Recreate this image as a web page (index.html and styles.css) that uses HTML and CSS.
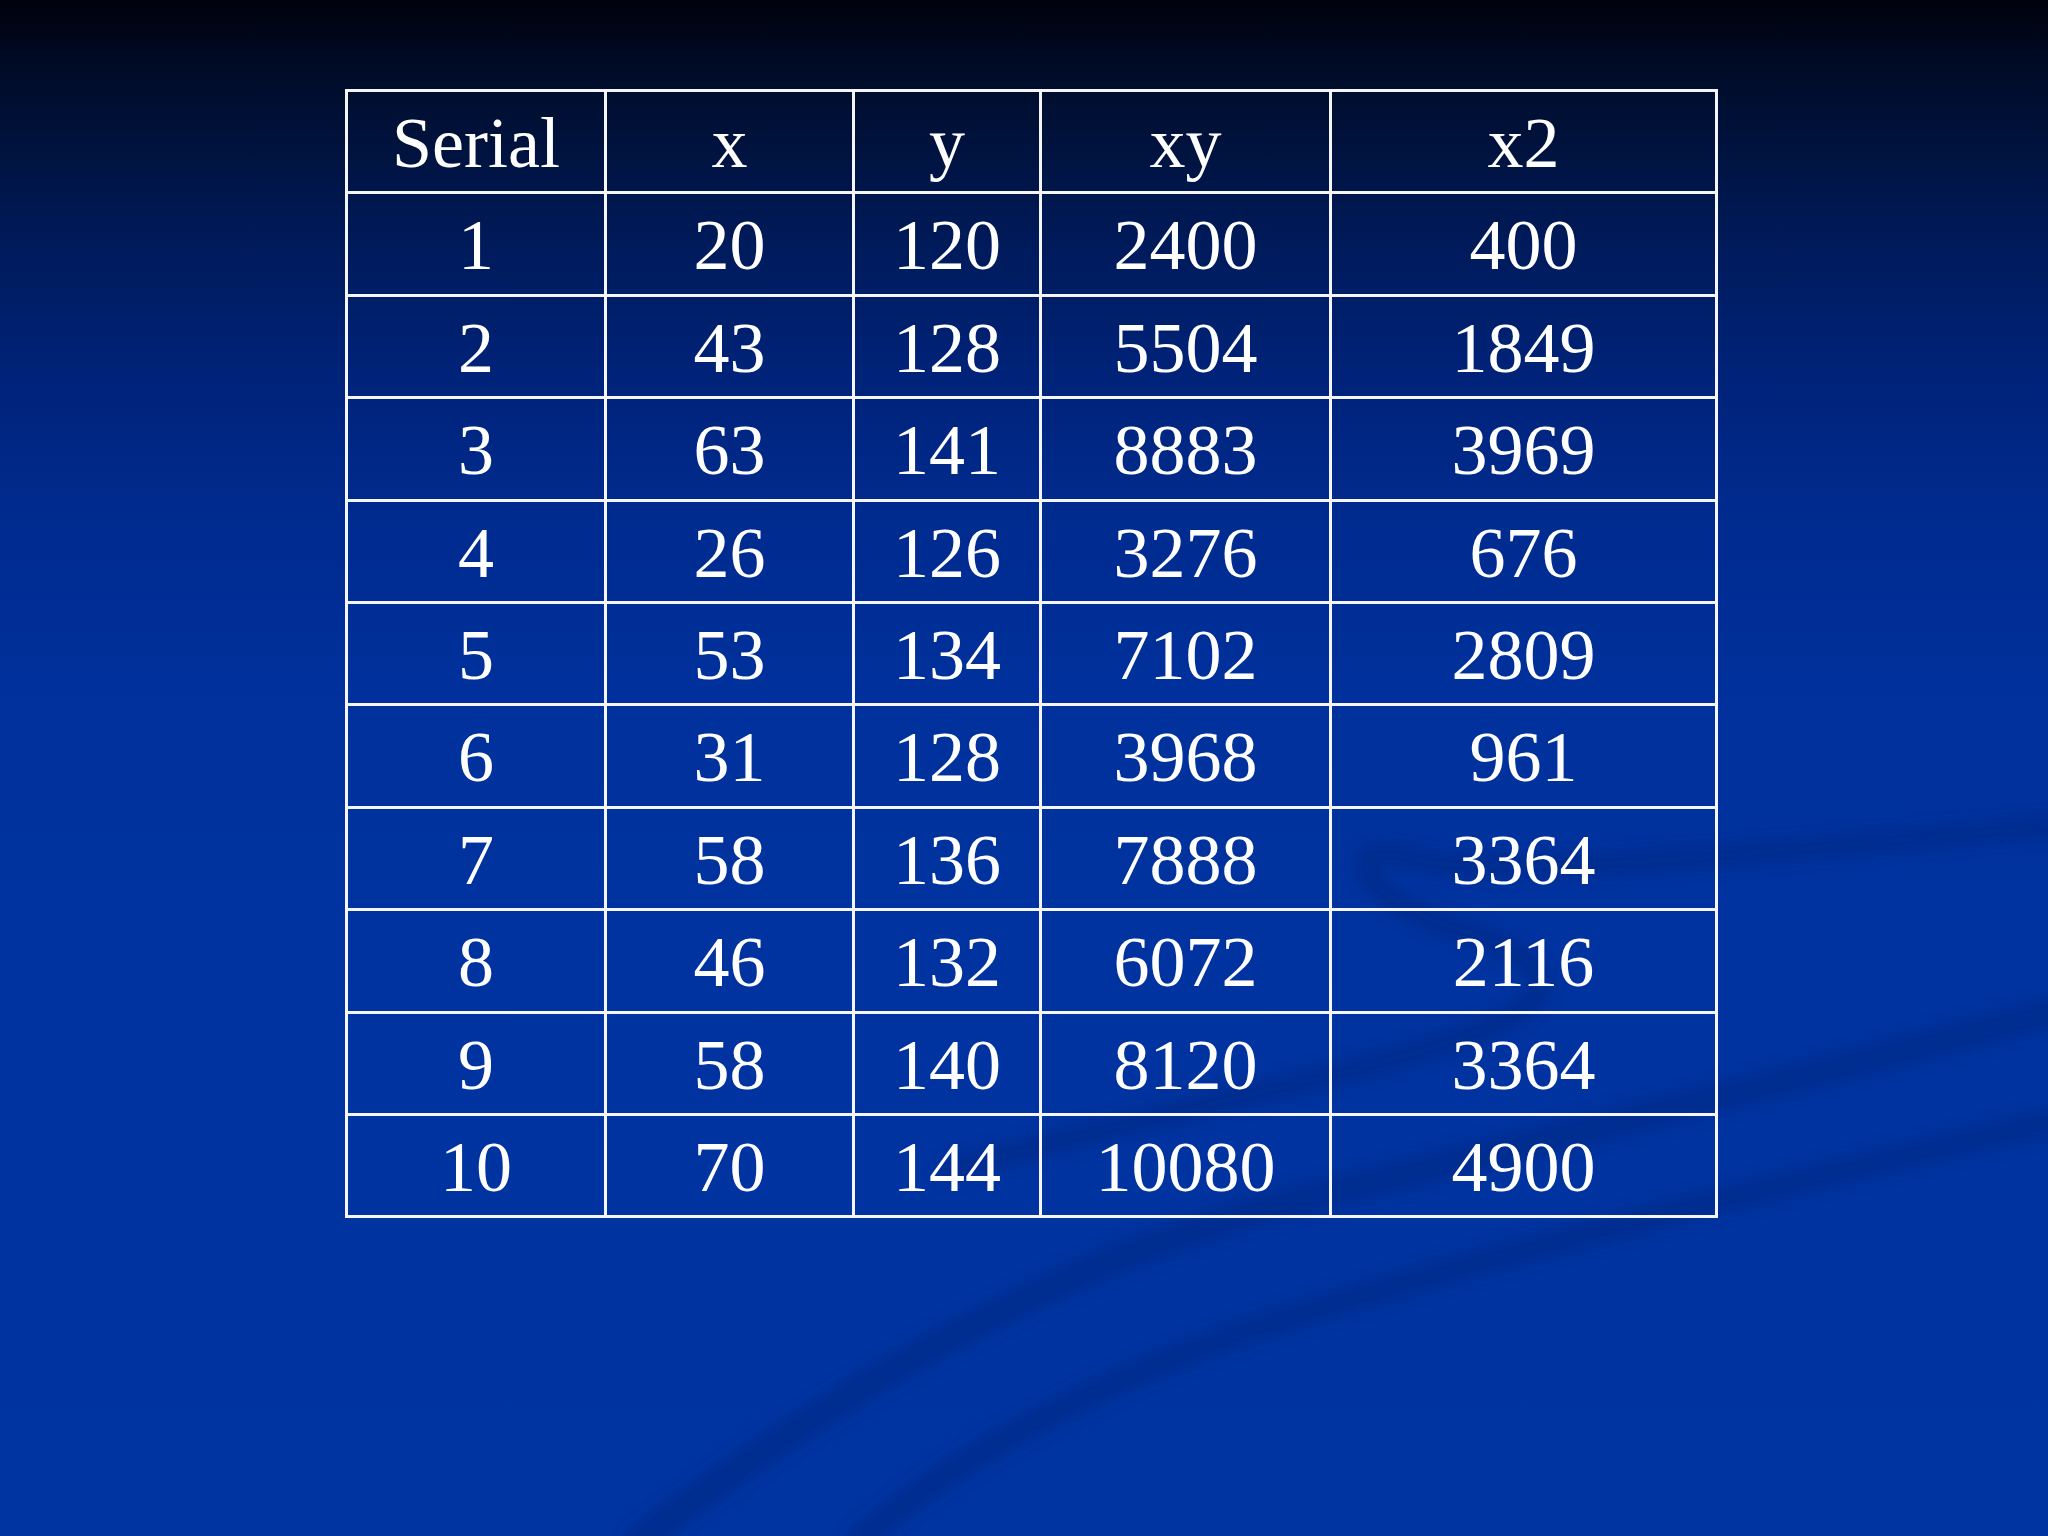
FILE: index.html
```html
<!DOCTYPE html>
<html>
<head>
<meta charset="utf-8">
<link rel="stylesheet" href="styles.css">
</head>
<body>
<div class="slide">
  <svg class="swoosh" width="2048" height="1536" viewBox="0 0 2048 1536">
    <defs>
      <filter id="blur" x="-20%" y="-20%" width="140%" height="140%"><feGaussianBlur stdDeviation="7"/></filter>
    </defs>
    <g fill="none" stroke="#002c8a" stroke-linecap="round" filter="url(#blur)" opacity="0.75">
      <path d="M2060 825 C1800 850 1500 880 1420 860 C1330 835 1360 900 1460 930 C1540 955 1560 985 1520 1010 C1450 1060 1200 1100 950 1170" stroke-width="24"/>
      <path d="M2060 1010 C1800 1080 1500 1150 1260 1210 C1050 1270 850 1380 640 1540" stroke-width="30"/>
      <path d="M2060 1120 C1800 1180 1500 1250 1250 1330 C1100 1380 950 1460 860 1540" stroke-width="26"/>
    </g>
  </svg>
  <table class="data">
    <colgroup>
      <col class="c1"><col class="c2"><col class="c3"><col class="c4"><col class="c5">
    </colgroup>
    <tr><td>Serial</td><td>x</td><td>y</td><td>xy</td><td>x2</td></tr>
    <tr><td>1</td><td>20</td><td>120</td><td>2400</td><td>400</td></tr>
    <tr><td>2</td><td>43</td><td>128</td><td>5504</td><td>1849</td></tr>
    <tr><td>3</td><td>63</td><td>141</td><td>8883</td><td>3969</td></tr>
    <tr><td>4</td><td>26</td><td>126</td><td>3276</td><td>676</td></tr>
    <tr><td>5</td><td>53</td><td>134</td><td>7102</td><td>2809</td></tr>
    <tr><td>6</td><td>31</td><td>128</td><td>3968</td><td>961</td></tr>
    <tr><td>7</td><td>58</td><td>136</td><td>7888</td><td>3364</td></tr>
    <tr><td>8</td><td>46</td><td>132</td><td>6072</td><td>2116</td></tr>
    <tr><td>9</td><td>58</td><td>140</td><td>8120</td><td>3364</td></tr>
    <tr><td>10</td><td>70</td><td>144</td><td>10080</td><td>4900</td></tr>
  </table>
</div>
</body>
</html>
```
FILE: styles.css
```css
html, body {
  margin: 0;
  padding: 0;
}
body {
  width: 2048px;
  height: 1536px;
  overflow: hidden;
}
.slide {
  position: relative;
  width: 2048px;
  height: 1536px;
  background: linear-gradient(to bottom,
    #00020c 0px,
    #000a24 60px,
    #00133f 150px,
    #001b5c 250px,
    #00237a 380px,
    #002b8f 520px,
    #00309b 680px,
    #00339f 900px,
    #0034a0 1536px);
  padding-top: 89px;
  padding-left: 345px;
  box-sizing: border-box;
}
.swoosh {
  position: absolute;
  left: 0;
  top: 0;
}
.data {
  position: relative;
  border-collapse: collapse;
  table-layout: fixed;
  width: 1372px;
  font-family: "Liberation Serif", "Times New Roman", serif;
  font-size: 72px;
  color: #ffffff;
}
.c1 { width: 259px; }
.c2 { width: 248px; }
.c3 { width: 187px; }
.c4 { width: 290px; }
.c5 { width: 386px; }
.data td {
  border: 3px solid #f4f6fb;
  text-align: center;
  padding: 4px 0 0 0;
  line-height: 95.4px;
  height: 95.4px;
  white-space: nowrap;
}
```
